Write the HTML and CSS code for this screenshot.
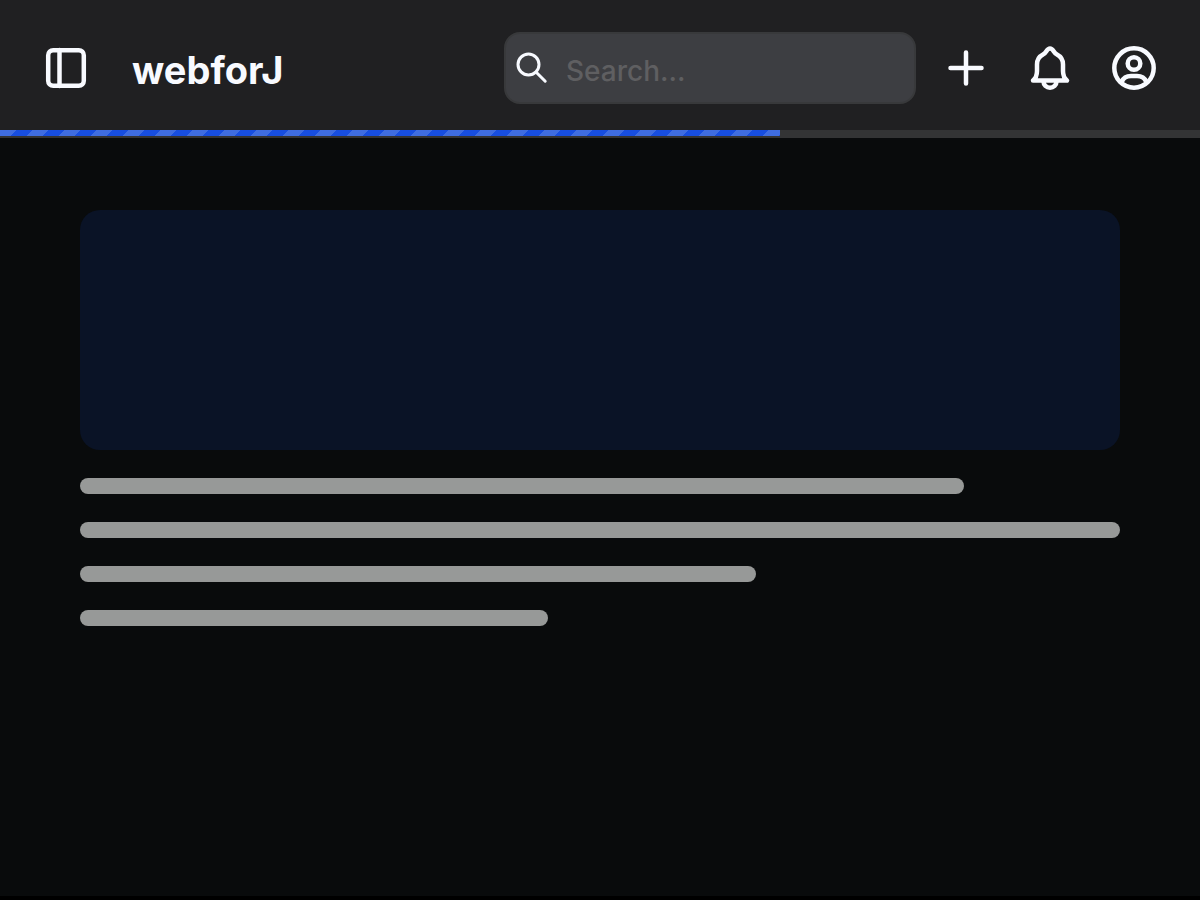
FILE: index.html
```html
<!DOCTYPE html>
<html lang="en">
<head>
<meta charset="utf-8">
<meta name="viewport" content="width=device-width, initial-scale=1">
<title>webforJ</title>
<link rel="stylesheet" href="styles.css">
</head>
<body>
<header class="header">
  <div class="toolbar">
    <button class="icon-button" type="button" aria-label="Toggle drawer">
      <svg class="icon" viewBox="0 0 48 48"><rect x="6.200" y="6.200" width="35.600" height="35.600" rx="5"/><path d="M17.500 6v36"/></svg>
    </button>
    <h1 class="title">webforJ</h1>
    <label class="search">
      <svg class="search-icon" viewBox="0 0 32 32" aria-hidden="true"><circle cx="12.5" cy="12.5" r="10.500"/><path d="M20.200 20.200l9 9"/></svg>
      <input class="search-input" type="search" placeholder="Search..." aria-label="Search">
    </label>
    <div class="actions">
      <button class="icon-button" type="button" aria-label="Add">
        <svg class="icon" viewBox="0 0 48 48"><path d="M24 8.500v31M8.500 24h31"/></svg>
      </button>
      <button class="icon-button" type="button" aria-label="Notifications">
        <svg class="icon" viewBox="0 0 48 48"><path d="M7 36.500C9.500 34.500 11 31 11 27V20.500C11 16 13 12.500 17 10.500C21 8.500 20.500 4.500 24 4.500S27 8.500 31 10.500C35 12.500 37 16 37 20.500V27C37 31 38.500 34.500 41 36.500Z"/><path d="M17.500 37.500a6.500 6.300 0 0 0 13 0"/></svg>
      </button>
      <button class="icon-button" type="button" aria-label="Account">
        <svg class="icon" viewBox="0 0 48 48"><circle cx="24" cy="24" r="19.700"/><circle cx="24" cy="19.500" r="6.300"/><path d="M12 37.500c1.500-4 5-5.500 9-5.500h6c4 0 7.500 1.500 9 5.500"/></svg>
      </button>
    </div>
  </div>
  <div class="progress" role="progressbar" aria-label="Loading" aria-valuenow="65" aria-valuemin="0" aria-valuemax="100">
    <div class="progress-fill" style="width: 65%"></div>
  </div>
</header>
<main class="content">
  <div class="card"></div>
  <div class="line line-long"></div>
  <div class="line"></div>
  <div class="line line-medium"></div>
  <div class="line line-short"></div>
</main>
</body>
</html>
```

FILE: styles.css
```css
* {
  box-sizing: border-box;
}

body {
  display: flex;
  flex-direction: column;
  min-height: 100vh;
  margin: 0;
  padding-bottom: 4px;
  background: #000;
  color: #f8faff;
  font-family: Inter, "Liberation Sans", sans-serif;
}

.header {
  background: #202022;
  border-bottom: 2px solid #333435;
}

.toolbar {
  display: flex;
  align-items: center;
  padding: 32px 42px 26px;
}

.icon-button {
  display: flex;
  padding: 0;
  border: 0;
  background: none;
  color: inherit;
}

.icon,
.search-icon {
  flex: none;
  fill: none;
  stroke: currentColor;
  stroke-linecap: round;
  stroke-linejoin: round;
}

.icon {
  width: 48px;
  height: 48px;
  stroke-width: 4.500;
}

.title {
  margin: 0 auto 0 42px;
  padding-top: 4px;
  font-size: 38px;
  font-weight: 700;
  line-height: 48px;
}

.search {
  display: flex;
  align-items: center;
  gap: 18px;
  flex: 0 1 412px;
  min-width: 0;
  height: 72px;
  padding: 0 10px;
  border: 2px solid #38393b;
  border-radius: 16px;
  background: #3d3e42;
}

.search-icon {
  width: 32px;
  height: 32px;
  stroke-width: 3;
}

.search-input {
  flex: 1;
  width: 100%;
  min-width: 0;
  padding: 6px 0 0;
  border: 0;
  outline: 0;
  background: none;
  color: inherit;
  font: 500 28px/36px Inter, "Liberation Sans", sans-serif;
}

.search-input::placeholder {
  color: #5f5f61;
  opacity: 1;
}

.actions {
  display: flex;
  gap: 36px;
  margin-left: 26px;
}

.progress {
  height: 6px;
  background: #333435;
}

.progress-fill {
  height: 100%;
  background: linear-gradient(135deg, #3f6de0 25%, #174ee0 25% 50%, #3f6de0 50% 75%, #174ee0 75%) 0 0 / 32px 32px;
}

.content {
  display: flex;
  flex: 1;
  flex-direction: column;
  gap: 28px;
  padding: 72px 80px;
  background: #090b0c;
}

.card {
  height: 240px;
  border-radius: 20px;
  background: #0a1326;
}

.line {
  height: 16px;
  border-radius: 8px;
  background: #979998;
}

.line-long {
  width: 85%;
}

.line-medium {
  width: 65%;
}

.line-short {
  width: 45%;
}
```
